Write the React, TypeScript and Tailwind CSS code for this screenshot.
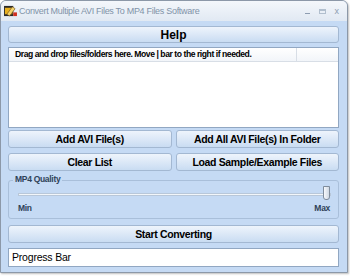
import React from 'react';

// ── Window chrome ─────────────────────────────────────────────────────────────

const TitleBar: React.FC = () => (
    <div className="h-[20px] shrink-0 flex items-center pl-[3px] pr-[8px] bg-gradient-to-b from-[#f4f7fb] to-[#e1e9f3]">
        <svg width="13" height="12" viewBox="0 0 14 13" className="shrink-0">
            <rect x="0" y="1" width="10" height="11" fill="#2a2a2a" />
            <rect x="1" y="3" width="8" height="7" fill="#e8b020" />
            <path d="M3 10 L9 2 L12 4 L6 12 Z" fill="#f4d36a" stroke="#5a3a10" strokeWidth="0.6" />
            <rect x="10" y="8" width="4" height="4" fill="#d03020" />
        </svg>
        <span className="ml-[2px] text-[9px] tracking-[-0.3px] text-[#8193a8] leading-none whitespace-nowrap">
            Convert Multiple AVI Files To MP4 Files Software
        </span>
        <div className="ml-auto flex items-center gap-[9px] text-[#8e9db1]">
            <span className="block w-[5px] h-[1px] bg-[#8e9db1] mt-[4px]" />
            <span className="block w-[7px] h-[5px] border border-[#b1bfce] border-t-2" />
            <span className="text-[9px] leading-none">x</span>
        </div>
    </div>
);

const Btn: React.FC<{ children: React.ReactNode; className?: string }> = ({ children, className = '' }) => (
    <div className={`flex items-center justify-center rounded-[3px] border border-[#a3b8d2] bg-gradient-to-b from-[#eef4fc] via-[#dce8f7] to-[#c9dcf2] font-bold text-black leading-none whitespace-nowrap ${className}`}>
        {children}
    </div>
);

// ── App ───────────────────────────────────────────────────────────────────────

export default function App() {
    return (
        <div className="w-[350px] h-[276px] bg-white font-['Liberation_Sans',Arial,sans-serif]">
            <div className="w-[348px] h-[273px] border border-[#8c98a8] rounded-t-[6px] bg-[#c5daf4] flex flex-col overflow-hidden shadow-[1px_1px_2px_rgba(0,0,0,0.25)]">
                <TitleBar />
                <div className="flex-1 flex flex-col pl-[7px] pr-[8px] pt-[5px]">
                    <Btn className="h-[17px] text-[12px]">Help</Btn>

                    <div className="mt-[4px] h-[81px] bg-white border border-[#91a7c2] flex flex-col">
                        <div className="h-[14px] flex items-center border-b border-[#d8dee6] bg-gradient-to-b from-[#ffffff] to-[#f2f5f9]">
                            <span className="pl-[6px] w-[288px] h-full flex items-center border-r border-[#d8dee6] text-[8.6px] tracking-[-0.45px] font-bold leading-none whitespace-nowrap">
                                Drag and drop files/folders here. Move | bar to the right if needed.
                            </span>
                        </div>
                    </div>

                    <div className="mt-[2px] grid grid-cols-2 gap-x-[4px] gap-y-[5px]">
                        <Btn className="h-[18px] text-[10.5px] tracking-[-0.35px]">Add AVI File(s)</Btn>
                        <Btn className="h-[18px] text-[10.5px] tracking-[-0.35px]">Add All AVI File(s) In Folder</Btn>
                        <Btn className="h-[18px] text-[10.5px] tracking-[-0.35px]">Clear List</Btn>
                        <Btn className="h-[18px] text-[10.5px] tracking-[-0.35px]">Load Sample/Example Files</Btn>
                    </div>

                    <div className="relative mt-[9px] h-[39px] border border-[#a9bfda] rounded-[3px]">
                        <span className="absolute left-[4px] top-[-6px] px-[2px] bg-[#c5daf4] text-[8.5px] tracking-[-0.3px] font-bold text-[#2f4259] leading-none">
                            MP4 Quality
                        </span>
                        <div className="flex flex-col pl-[9px] pr-[7px] pt-[12px]">
                            <div className="relative h-[3px] border border-[#b8c7d9] bg-[#f2f6fa]">
                                <div className="absolute right-[0px] top-[-8px] w-[7px] h-[14px] rounded-b-[3px] border border-[#7f8c9c] bg-gradient-to-r from-[#f7f9fc] to-[#d0d9e4]" />
                            </div>
                            <div className="flex justify-between mt-[8px] text-[8.5px] tracking-[-0.3px] font-bold text-[#2f4259] leading-none">
                                <span>Min</span>
                                <span className="mr-[1px]">Max</span>
                            </div>
                        </div>
                    </div>

                    <Btn className="mt-[6px] h-[18px] text-[10.5px] tracking-[-0.35px]">Start Converting</Btn>

                    <div className="mt-[5px] h-[19px] bg-white border border-[#91a7c2] flex items-center pl-[3px] text-[10.5px] tracking-[-0.2px] text-black leading-none">
                        Progress Bar
                    </div>
                </div>
            </div>
        </div>
    );
}
